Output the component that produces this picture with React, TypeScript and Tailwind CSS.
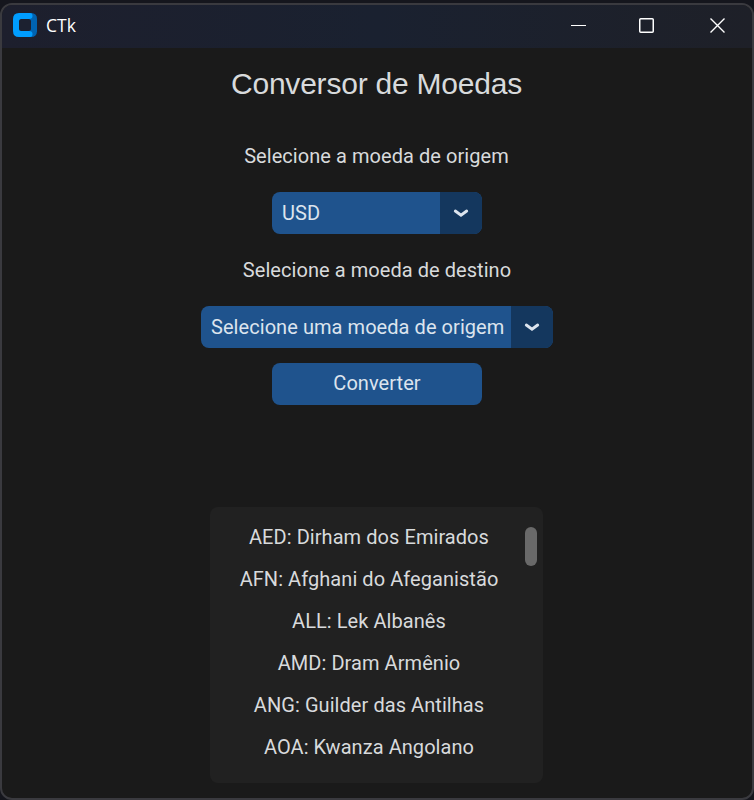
const currencies = [
  'AED: Dirham dos Emirados',
  'AFN: Afghani do Afeganistão',
  'ALL: Lek Albanês',
  'AMD: Dram Armênio',
  'ANG: Guilder das Antilhas',
  'AOA: Kwanza Angolano',
];

function AppLogo() {
  return (
    <svg width="24" height="24" viewBox="0 0 24 24">
      <rect x="6" width="18" height="24" rx="5.5" fill="#0063b1" />
      <path d="M6 0H17Q19.500 0 19.500 3Q19.500 6 16 6H9Q6 6 6 9V15Q6 18 9 18H16Q19.500 18 19.500 21Q19.500 24 17 24H6Q0 24 0 18V6Q0 0 6 0Z" fill="#009dff" />
      <rect x="6" y="6" width="12" height="12" rx="2.500" fill="#1c2130" />
    </svg>
  );
}

function TitleBar() {
  return (
    <header className="flex h-[43px] shrink-0 items-start bg-linear-to-r from-[#1d1f2d] via-[#1a2130] to-[#1e2028] pl-[11px] pr-[27px] pt-2 text-white">
      <AppLogo />
      <h1 className="ml-[9px] font-['Open_Sans',sans-serif] text-[17.5px] leading-6 tracking-[0px]">CTk</h1>
      <div className="ml-auto flex items-start pt-[5px]">
        <svg className="mr-[53px]" width="15" height="15" viewBox="0 0 15 15"><path d="M0 7.500H15" stroke="currentColor" /></svg>
        <svg className="mr-[56px]" width="15" height="15" viewBox="0 0 15 15" fill="none"><rect x="0.750" y="0.750" width="13.500" height="13.500" rx="1" stroke="currentColor" strokeWidth="1.500" /></svg>
        <svg width="15" height="15" viewBox="0 0 15 15" fill="none"><path d="M0.500 0.500L14.500 14.500M14.500 0.500L0.500 14.500" stroke="currentColor" strokeWidth="1.400" /></svg>
      </div>
    </header>
  );
}

function Select({ value, width }: { value: string; width: string }) {
  return (
    <button className={`flex h-[42px] overflow-hidden rounded-lg bg-[#1f538d] text-[#dce4ee] ${width}`}>
      <span className="flex h-full flex-1 items-center whitespace-nowrap pl-[10px]">{value}</span>
      <span className="flex h-full w-[42px] items-center justify-center bg-[#14375e]">
        <svg width="16" height="10" viewBox="0 0 16 10" fill="none">
          <path d="M2.300 3L8 7.200L13.700 3" stroke="currentColor" strokeWidth="2.900" strokeLinecap="round" strokeLinejoin="miter" />
        </svg>
      </span>
    </button>
  );
}

export default function App() {
  return (
    <div className="h-[800px] w-[754px] overflow-hidden bg-[#15161d] pt-[3px] font-[Roboto,sans-serif] text-[20px] leading-6 tracking-[0.06px]">
      <div className="flex h-[797px] flex-col overflow-hidden rounded-[12px] border-2 border-[#3a3a3f] bg-[#1a1a1a]">
        <TitleBar />
        <main className="flex flex-1 flex-col items-center text-[#d8dadc]">
          <h2 className="mt-[18px] h-9 pr-px font-['Liberation_Sans',Arial,sans-serif] text-[30px] leading-9 tracking-[-0.22px]">Conversor de Moedas</h2>
          <p className="mt-[42px] pr-px">Selecione a moeda de origem</p>
          <div className="mt-6"><Select value="USD" width="w-[210px]" /></div>
          <p className="mt-6">Selecione a moeda de destino</p>
          <div className="mt-6"><Select value="Selecione uma moeda de origem" width="w-[352px]" /></div>
          <button className="mt-[15px] h-[42px] w-[210px] rounded-lg bg-[#1f538d] pb-[2px] text-[#dce4ee]">Converter</button>
          <section className="mr-[2px] mt-[102px] flex h-[276px] w-[333px] justify-between rounded-lg bg-[#212121] pr-[6px] pt-[9px]">
            <ul className="w-[315px] pl-1 text-center">
              {currencies.map((c) => (
                <li key={c} className="h-[42px] leading-[42px]">{c}</li>
              ))}
            </ul>
            <div className="mt-[11px] h-[39px] w-3 shrink-0 rounded-full bg-[#696969]" />
          </section>
        </main>
      </div>
    </div>
  );
}
